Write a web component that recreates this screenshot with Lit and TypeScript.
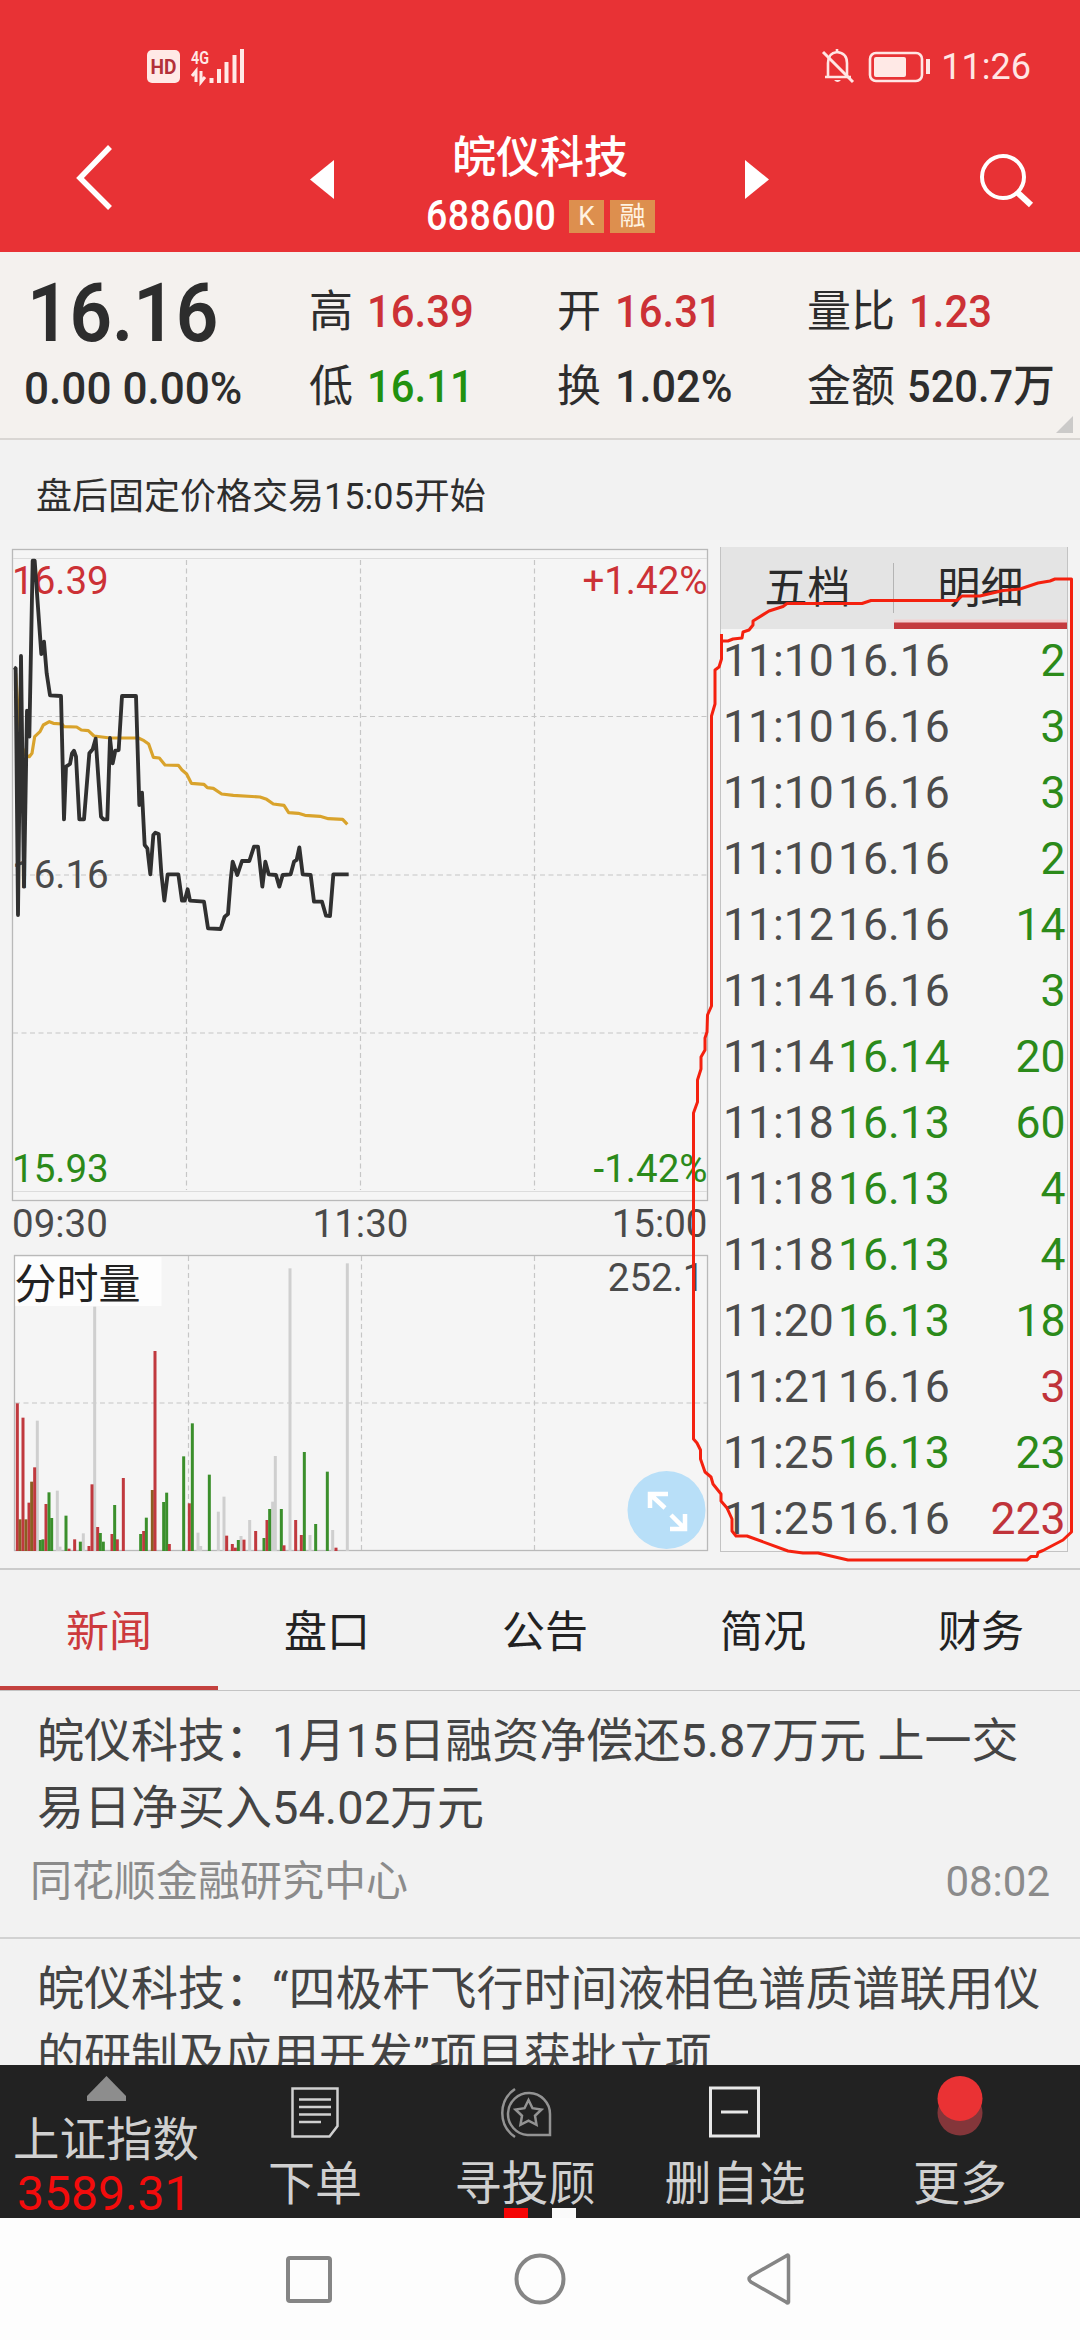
import { LitElement, html, svg, css } from "lit";
import { customElement, property } from "lit/decorators.js";
import { classMap } from "lit/directives/class-map.js";

const FONT = css`Roboto, "Noto Sans CJK SC", sans-serif`;

/* Chart geometry is kept in thirds of a pixel and scaled down when drawn. */
const PRICE =
  "42,382 47,385 54,1125 63,348 72,1040 81,512 88,590 98,62 104,62 124,342 132,305 140,400 150,466 183,468 192,838 198,680 210,672 216,640 222,632 228,650 238,838 252,838 268,640 278,628 287,596 303,830 310,838 322,838 330,594 338,670 346,632 356,630 366,468 408,468 418,795 426,758 434,915 442,925 451,1003 460,885 466,878 476,882 484,1000 493,1082 503,1003 535,1003 546,1082 554,1082 563,1048 570,1082 612,1085 624,1165 662,1167 674,1130 684,1122 692,1020 698,965 712,1005 726,963 748,963 762,920 774,920 787,1040 796,965 806,1003 828,1005 838,1040 848,1005 872,1003 882,965 890,960 898,922 908,1003 932,1005 942,1085 966,1085 978,1127 990,1128 1000,1003 1046,1003";
const AVERAGE =
  "47,400 55,520 66,620 76,645 88,650 96,640 104,590 120,575 130,555 148,545 160,550 186,552 192,560 230,561 244,570 265,572 282,588 330,594 415,594 432,602 446,612 460,652 478,654 495,675 535,676 546,690 560,702 574,730 612,733 622,743 640,745 665,762 700,766 780,771 800,778 820,792 852,796 866,818 895,820 915,826 960,829 985,836 1028,838 1042,853";

const R = "#c0393e";
const G = "#3b8f2c";
const O = "#8a5f22";
const N = "#cfcfcf";
const VOLUME: [number, number, string][] = [
  [112, 812, N], [172, 1022, N], [284, 470, N], [250, 1150, N], [594, 1148, N], [655, 1085, N],
  [672, 1040, N], [723, 1158, N], [749, 1110, N], [818, 1055, N], [826, 918, N], [870, 355, N],
  [930, 1155, N], [998, 1140, N], [1042, 340, N], [180, 1190, N], [602, 1188, N],
  [52, 760, R], [60, 1108, O], [69, 803, R], [78, 1108, O], [87, 1058, R], [95, 995, O], [104, 952, R],
  [121, 1170, G], [129, 1168, G], [138, 1062, R], [147, 1027, G], [155, 1104, G], [198, 1097, G],
  [207, 1196, R], [224, 1168, R], [241, 1175, G], [267, 1188, R], [276, 1003, R], [293, 1131, R],
  [301, 1149, G], [310, 1175, G], [336, 1152, R], [344, 1065, G], [352, 1168, R], [370, 984, R],
  [422, 1152, G], [431, 1143, R], [439, 1103, G], [457, 1020, O], [465, 603, R], [491, 1056, G],
  [500, 1028, G], [508, 1182, R], [551, 919, G], [568, 1060, R], [577, 820, G], [628, 974, G],
  [680, 1157, R], [697, 1182, R], [706, 1193, R], [715, 1170, G], [732, 1169, R], [767, 1143, R],
  [792, 1164, G], [801, 1110, R], [809, 1077, G], [844, 1077, G], [852, 1186, R], [887, 1110, R],
  [904, 1155, R], [913, 906, G], [947, 1122, G], [982, 965, G], [1008, 1193, R],
];

const DEALS: [string, string, string, string, string][] = [
  ["11:10", "16.16", "2", "", "dn"], ["11:10", "16.16", "3", "", "dn"], ["11:10", "16.16", "3", "", "dn"],
  ["11:10", "16.16", "2", "", "dn"], ["11:12", "16.16", "14", "", "dn"], ["11:14", "16.16", "3", "", "dn"],
  ["11:14", "16.14", "20", "dn", "dn"], ["11:18", "16.13", "60", "dn", "dn"], ["11:18", "16.13", "4", "dn", "dn"],
  ["11:18", "16.13", "4", "dn", "dn"], ["11:20", "16.13", "18", "dn", "dn"], ["11:21", "16.16", "3", "", "up"],
  ["11:25", "16.13", "23", "dn", "dn"], ["11:25", "16.16", "223", "", "up"],
];

@customElement("stock-header")
class StockHeader extends LitElement {
  static styles = css`
    :host { display: block; height: 252px; background: #e83235; color: #fff; font-family: ${FONT}; }
    .status { height: 132px; padding: 2px 49px 0 147px; display: flex; align-items: center; box-sizing: border-box; }
    .status svg { display: block; flex: none; overflow: visible; }
    .net { margin-right: auto; }
    .clock { font-size: 36px; line-height: 44px; margin-left: 4px; color: #ffe6e4; }
    .nav { height: 120px; display: grid; grid-template-columns: 134px 276px 260px 276px 134px; }
    .nav > svg { display: block; }
    .title { text-align: center; white-space: nowrap; }
    .name { font-size: 44px; font-weight: 500; line-height: 52px; height: 57px; }
    .code { display: flex; align-items: center; height: 54px; padding-left: 16px; }
    .num { font-size: 42px; font-weight: 500; line-height: 48px; width: 143px; text-align: left; letter-spacing: 0.4px; transform: scaleX(0.895); transform-origin: 0 50%; }
    .tag { background: #dd8f4e; height: 33px; line-height: 33px; font-size: 26px; width: 35px; flex: none; color: #fff3e2; }
    .tag.wide { width: 45px; margin-left: 6px; }
  `;
  render() {
    return html`
      <div class="status">
        <svg class="net" width="100" height="36" viewBox="0 0 100 36">
          <rect x="0" y="1" width="33" height="33" rx="5" fill="#ffe9e6" />
          <text x="16.5" y="25" text-anchor="middle" font-size="20" font-weight="700" fill="#b33139" textLength="26" lengthAdjust="spacingAndGlyphs">HD</text>
          <text x="44" y="15" font-size="19" font-weight="600" fill="#ffe9e6" textLength="18" lengthAdjust="spacingAndGlyphs">4G</text>
          <path d="M49 33V22l-4 5M54 22v11l4-5" fill="none" stroke="#ffe9e6" stroke-width="3" />
          <path d="M64.500 34v-5M72 34V20M79.500 34V13M87.500 34V6M95 34V0" stroke="#ffe9e6" stroke-width="4" />
        </svg>
        <svg width="116" height="36" viewBox="0 0 116 36">
          <g fill="none" stroke="#ffe6e4" stroke-width="2.600">
            <path d="M4 28h26M7 27V14q0-10 9-11q10 1 10 11v14M16 3V0" />
            <path d="M2 3l30 30" stroke-width="3" />
            <rect x="49" y="4" width="52" height="28" rx="6" />
          </g>
          <path d="M13 31h7q-3.500 4-7 0" fill="#ffe6e4" />
          <rect x="53" y="8" width="32" height="20" rx="2" fill="#ffe9e6" />
          <path d="M107 10v15" stroke="#ffe6e4" stroke-width="4" />
        </svg>
        <span class="clock">11:26</span>
      </div>
      <div class="nav">
        <svg width="134" height="120"><path d="M110 15L80 46L110 76" fill="none" stroke="#fff" stroke-width="5.500" /></svg>
        <svg width="276" height="120"><path d="M200 28L176 47.500L200 67Z" fill="#fff" /></svg>
        <div class="title">
          <div class="name">皖仪科技</div>
          <div class="code"><span class="num">688600</span><span class="tag">K</span><span class="tag wide">融</span></div>
        </div>
        <svg width="276" height="120"><path d="M75 28L99 47.500L75 67Z" fill="#fff" /></svg>
        <svg width="134" height="120">
          <circle cx="57" cy="45" r="21" fill="none" stroke="#fff" stroke-width="4" />
          <path d="M71 60l14 13" stroke="#fff" stroke-width="6" />
        </svg>
      </div>
    `;
  }
}

@customElement("quote-panel")
class QuotePanel extends LitElement {
  static styles = css`
    :host { display: block; height: 186px; box-sizing: content-box; background: #f4f1ee; border-bottom: 2px solid #d9d6d3; font-family: ${FONT}; color: #2d2d2d; position: relative; }
    .grid { display: grid; grid-template-columns: 283px 248px 250px 272px; grid-template-rows: 75px 75px; padding: 22px 0 0 26px; }
    .cell { display: flex; align-items: center; white-space: nowrap; font-size: 44px; line-height: 60px; }
    .val { font-size: 45px; font-weight: 500; margin-left: 14px; display: inline-block; transform: scaleX(0.93); transform-origin: 0 50%; }
    .pct { transform: scaleX(0.96); }
    .wide { margin-left: 12px; transform: scaleX(0.925); }
    .big { font-size: 81px; font-weight: 600; line-height: 90px; display: inline-block; transform: scaleX(0.92); transform-origin: 0 50%; padding: 5px 0 0 1px; }
    .small { margin-left: -2px; padding-top: 4px; transform: scaleX(0.98); }
    .up { color: #cc3136; }
    .dn { color: #22910f; }
    .corner { position: absolute; right: 7px; bottom: 5px; width: 17px; height: 17px; }
  `;
  render() {
    const cell = (label: string, value: string, tone = "") =>
      html`<div class="cell">${label}<span class="val ${tone}">${value}</span></div>`;
    return html`
      <div class="grid">
        <div class="cell"><span class="big">16.16</span></div>
        ${cell("高", "16.39", "up")}${cell("开", "16.31", "up")}${cell("量比", "1.23", "up")}
        <div class="cell"><span class="val small">0.00 0.00%</span></div>
        ${cell("低", "16.11", "dn")}${cell("换", "1.02%", "pct")}${cell("金额", "520.7万", "wide")}
      </div>
      <svg class="corner" viewBox="0 0 17 17"><path d="M17 0V17H0Z" fill="#cbcac9" /></svg>
    `;
  }
}

@customElement("trend-chart")
class TrendChart extends LitElement {
  static styles = css`
    :host { display: block; width: 715px; height: 1028px; flex: none; }
    svg { display: block; }
    text { font-family: ${FONT}; font-size: 38.500px; fill: #4a4a4a; }
    .frame { fill: #f5f5f5; stroke: #b9b9b9; stroke-width: 1.3; }
    .solid { stroke: #dcdcdc; stroke-width: 1.2; }
    .dash { stroke: #c6c6c6; stroke-width: 1.2; stroke-dasharray: 5 3.500; fill: none; }
    .up { fill: #cc3136; }
    .dn { fill: #2b8a1a; }
    .end { text-anchor: end; }
    .mid { text-anchor: middle; }
    .label { font-size: 42px; fill: #222; }
  `;
  render() {
    return html`
      <svg width="715" height="1028" viewBox="0 540 715 1028">
        <rect class="frame" x="12.500" y="549.500" width="695" height="651" />
        <path class="solid" d="M13 558.500H707M13 1191.500H707" />
        <path class="dash" d="M186.500 560V1190M360.500 560V1190M534.500 560V1190M13 716.500H707M13 875H707M13 1033H707" />
        <text class="up" x="12" y="594">16.39</text>
        <text class="up end" x="707.500" y="594">+1.42%</text>
        <text x="12" y="888">16.16</text>
        <text class="dn" x="12" y="1182">15.93</text>
        <text class="dn end" x="707.500" y="1182">-1.42%</text>
        <text x="12" y="1237">09:30</text>
        <text class="mid" x="360.500" y="1237">11:30</text>
        <text class="end" x="707.500" y="1237">15:00</text>
        <g transform="translate(0 540) scale(0.33333)" fill="none" stroke-linejoin="round">
          <polyline points=${AVERAGE} stroke="#d9a32c" stroke-width="9.500" />
          <polyline points=${PRICE} stroke="#303030" stroke-width="11.500" />
        </g>

        <rect class="frame" x="14.500" y="1255.500" width="693" height="295" />
        <path class="dash" d="M188.500 1256V1550M361.500 1256V1550M534.500 1256V1550M15 1403H707" />
        <g transform="translate(0 1150) scale(0.33333)">
          ${VOLUME.map(([x, y, c]) => svg`<rect x=${x - 4.5} y=${y} width="9" height=${1203 - y} fill=${c} />`)}
        </g>
        <rect x="15.500" y="1257" width="146" height="49" fill="#fdfdfd" />
        <text class="label" x="14.500" y="1299">分时量</text>
        <text class="end" x="704.500" y="1291">252.1</text>
        <circle cx="666.500" cy="1510" r="39" fill="#b8dff8" />
        <g stroke="#fff" stroke-width="4.500" fill="none">
          <path d="M650 1508V1494H668M651 1495L665 1508M685 1514V1529H670M684 1528L671 1515" />
        </g>
      </svg>
    `;
  }
}

@customElement("deal-panel")
class DealPanel extends LitElement {
  static styles = css`
    :host { display: block; box-sizing: border-box; width: 348px; height: 1005px; margin: 7px 0 0 5px; border: 1px solid #c3c3c3; border-top: 0; background: #f5f5f5; font-family: ${FONT}; }
    .tabs { display: grid; grid-template-columns: 1fr 1fr; grid-template-rows: 82px; height: 82px; background: #e4e4e4; color: #2b2b2b; }
    .tab { font-size: 43px; line-height: 82px; text-align: center; box-sizing: border-box; }
    .tab:first-child { background: linear-gradient(#b4b4b4, #b4b4b4) 100% 16px / 1px 50px no-repeat; }
    .active { box-shadow: inset 0 -6.500px #c43a3e, inset 0 -9.500px #f3cfd0; }
    .rows { padding-top: 5px; }
    .row { height: 66px; line-height: 54px; font-size: 44.500px; color: #4c4c4c; display: grid; grid-template-columns: 115px 120px 1fr; padding: 0 1.500px 0 2px; }
    .qty { text-align: right; }
    .up { color: #c0333a; }
    .dn { color: #2b8a1a; }
  `;
  render() {
    return html`
      <div class="tabs"><div class="tab">五档</div><div class="tab active">明细</div></div>
      <div class="rows">
        ${DEALS.map(([t, p, q, pc, qc]) => html`
          <div class="row"><span>${t}</span><span class=${pc}>${p}</span><span class="qty ${qc}">${q}</span></div>`)}
      </div>
    `;
  }
}

@customElement("news-section")
class NewsSection extends LitElement {
  static styles = css`
    :host { display: block; height: 497px; overflow: hidden; box-sizing: border-box; border-top: 2px solid #cbcbcb; font-family: ${FONT}; background: #f2f2f2; }
    .tabs { display: grid; grid-template-columns: repeat(5, 218px); height: 121px; box-sizing: border-box; border-bottom: 1.500px solid #c4c4c4; }
    .tab { font-size: 43px; line-height: 124px; text-align: center; color: #222; height: 120px; }
    .active { color: #cc3a3d; box-shadow: inset 0 -4px #c4423f; }
    .item { padding: 16px 20px 0 37px; height: 248px; box-sizing: border-box; border-bottom: 2px solid #d2d2d2; }
    .head { font-size: 47px; line-height: 67px; color: #444; white-space: nowrap; }
    .meta { display: flex; justify-content: space-between; font-size: 42px; line-height: 50px; color: #8b8b8b; margin: 16px 10px 0 -7px; }
  `;
  render() {
    return html`
      <div class="tabs">
        ${["新闻", "盘口", "公告", "简况", "财务"].map((t, i) => html`<div class=${classMap({ tab: true, active: i === 0 })}>${t}</div>`)}
      </div>
      <div class="item">
        <div class="head">皖仪科技：1月15日融资净偿还5.87万元 上一交<br />易日净买入54.02万元</div>
        <div class="meta"><span>同花顺金融研究中心</span><span>08:02</span></div>
      </div>
      <div class="item">
        <div class="head">皖仪科技：“四极杆飞行时间液相色谱质谱联用仪<br />的研制及应用开发”项目获批立项</div>
      </div>
    `;
  }
}

@customElement("action-bar")
class ActionBar extends LitElement {
  static styles = css`
    :host { display: block; height: 153px; background: #222; color: #d0d0d0; font-family: ${FONT}; position: relative; }
    .bar { display: grid; grid-template-columns: 210px 210px 210px 210px 240px; height: 153px; }
    .index { padding-left: 13px; font-size: 46.500px; line-height: 54px; white-space: nowrap; }
    .index svg { display: block; margin: 11px 0 12px 74px; }
    .value { color: #f30c0c; font-size: 48px; line-height: 50px; padding: 2px 0 0 4px; height: 49px; }
    .act { display: flex; flex-direction: column; align-items: center; font-size: 47px; line-height: 54px; }
    .act svg { display: block; margin: 15px 0 13px; overflow: visible; }
    .page { position: absolute; bottom: 0; width: 24px; height: 10px; }
    .one { left: 504px; background: #f50505; }
    .two { left: 552px; background: #fafafa; }
  `;
  @property({ attribute: false }) actions = ["下单", "寻投顾", "删自选", "更多"];
  private icons = [
    svg`<path d="M9.500 16.500H54.500V54L46.500 64.500H9.500Z" stroke-width="2.500"/><path d="M16 27.500H48M16 35H48M16 42.500H48M16 50H38" stroke-width="2.500"/>`,
    svg`<g stroke="#939393" stroke-width="2.500"><path d="M57 63H34.500A21 21 0 1 1 57 42Z" /><path d="M22 17A29 29 0 0 0 22 65"/><path d="M35.500 28l4 8.200 9 1.300-6.500 6.300 1.500 9-8-4.200-8 4.200 1.500-9-6.500-6.300 9-1.300Z"/></g>`,
    svg`<rect x="7.500" y="16" width="48" height="48" stroke="#e8e8e8" stroke-width="3"/><path d="M18 40H45" stroke="#e8e8e8" stroke-width="3"/>`,
    svg`<circle cx="32" cy="41" r="22.500" fill="#84363a" stroke="none"/><circle cx="32" cy="26.500" r="22.500" fill="#ea3234" stroke="none"/>`,
  ];
  render() {
    return html`
      <div class="bar">
        <div class="index">
          <svg width="39" height="25"><path d="M19.500 0L39 20V25H0V20Z" fill="#8d8d8d" /></svg>
          上证指数
          <div class="value">3589.31</div>
        </div>
        ${this.actions.map((a, i) => html`
          <div class="act"><svg width="64" height="64" viewBox="0 8 64 64" fill="none" stroke="#d0d0d0">${this.icons[i]}</svg>${a}</div>`)}
      </div>
      <span class="page one"></span><span class="page two"></span>
    `;
  }
}

@customElement("app-root")
class AppRoot extends LitElement {
  static styles = css`
    :host { display: block; position: relative; width: 1080px; height: 2340px; overflow: hidden; background: #f2f2f2; font-family: ${FONT}; }
    .notice { height: 100px; padding-left: 36px; font-size: 36px; line-height: 114px; color: #2d2d2d; }
    .market { display: flex; height: 1028px; background: #f3f3f3; }
    .system { height: 122px; background: #fdfdfd; display: block; }
    .mark { position: absolute; left: 0; top: 0; pointer-events: none; }
  `;
  render() {
    return html`
      <stock-header></stock-header>
      <quote-panel></quote-panel>
      <div class="notice">盘后固定价格交易15:05开始</div>
      <div class="market"><trend-chart></trend-chart><deal-panel></deal-panel></div>
      <news-section></news-section>
      <action-bar></action-bar>
      <svg class="system" width="1080" height="122" fill="none" stroke="#858585" stroke-width="4">
        <rect x="288" y="40" width="42" height="43" rx="2" />
        <circle cx="540" cy="61" r="23.500" />
        <path d="M788.500 38V84Q788 86 786 84L751 64Q747 61 751 58L786 38Q788 36 788.500 38Z" stroke-width="3.500" />
      </svg>
      <svg class="mark" width="1080" height="1600" fill="none" stroke="#f4210f" stroke-width="3" stroke-linejoin="round">
        <path d="M721.500 634V659L719 667L715 670V704L711.500 716V1006L707.500 1015L707 1032L705 1038V1050L701 1057V1069L697.500 1080V1102L693.500 1113V1439L697 1443L700.500 1450V1459L705 1472L711 1477L713 1484L721 1494V1501L727 1508L732 1519V1531L736 1536H747L788 1551L803 1553H818L848 1560H1027L1031 1556.500H1037L1038 1552.500L1043 1550.500L1063 1540L1071.500 1532V579H1055L1050 581L1038 583L1020 589L1003 590.500L980 596H962L957 600.500H871L862 603.500H787L783 606.500L769 611L753 621V625L749 630L743 632L742 638L733 639L728 641H721.500" />
      </svg>
    `;
  }
}
